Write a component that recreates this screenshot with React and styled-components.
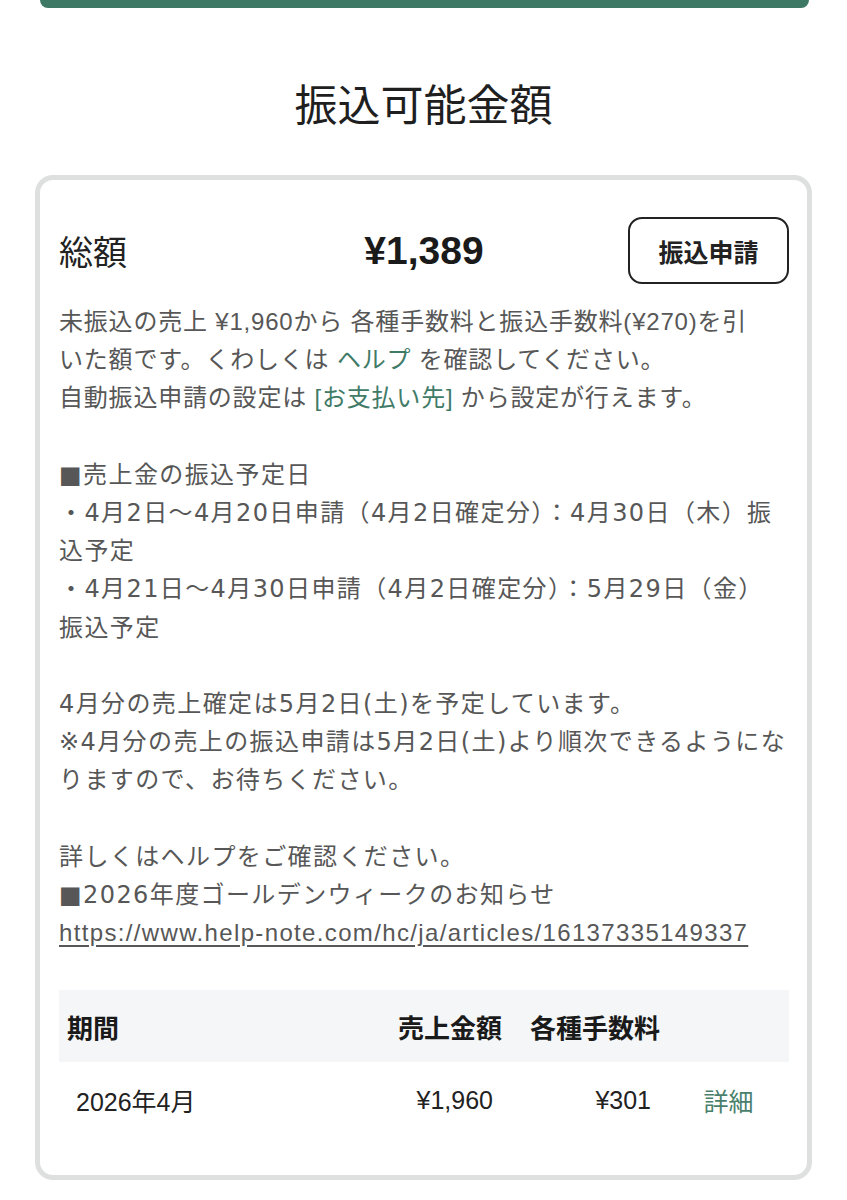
import React from 'react';
import styled, {createGlobalStyle} from "styled-components";

const GlobalStyle = createGlobalStyle`
  body {
    margin: 0;
    background: #fff;
    font-family: "Liberation Sans", "Noto Sans CJK JP", sans-serif;
    color: #222;
  }
`;

const TopBar = styled.div`
  height: 8px;
  margin: 0 38px 0 40px;
  background: #3e7966;
  border-radius: 0 0 10px 10px;
`;

const Title = styled.h1`
  margin: 68px 0 0;
  font-size: 43px;
  line-height: 60px;
  font-weight: 400;
  text-align: center;
  color: #1f1f1f;
`;

const Card = styled.section`
  margin: 39px 35px 0;
  border: 5px solid #dedfdf;
  border-radius: 18px;
  padding: 37px 18px 37px 19px;
`;

const TotalRow = styled.div`
  display: grid;
  grid-template-columns: 1fr auto 1fr;
  align-items: center;
  height: 67px;
`;

const TotalLabel = styled.div`
  font-size: 34px;
  color: #222;
`;

const TotalAmount = styled.div`
  font-size: 39px;
  font-weight: 700;
  color: #1a1a1a;
`;

const ApplyButton = styled.button`
  justify-self: end;
  width: 161px;
  height: 67px;
  border: 2px solid #222;
  border-radius: 14px;
  background: #fff;
  font-family: inherit;
  font-size: 25px;
  font-weight: 700;
  color: #222;
`;

const Notes = styled.div`
  margin-top: 19px;
  display: flex;
  flex-direction: column;
  gap: 38.2px;
`;

const Note = styled.p`
  margin: 0;
  font-family: ${p => p.$wide
    ? '"DejaVu Sans", "Noto Sans CJK JP", sans-serif'
    : '"Liberation Sans", "Noto Sans CJK JP", sans-serif'};
  font-size: 24px;
  line-height: 38.2px;
  letter-spacing: ${p => p.$wide ? '1.4px' : '0.8px'};
  color: #575757;
`;

const Link = styled.a`
  color: #3f7b67;
  text-decoration: none;
`;

const Url = styled.a`
  font-family: "Liberation Sans", sans-serif;
  color: #575757;
  letter-spacing: 1.35px;
  text-decoration: underline;
  text-underline-offset: 4px;
`;

const Table = styled.div`
  margin-top: 38px;
  display: grid;
  grid-template-columns: 1fr 136px 158px 121px;
`;

const HeadCell = styled.div`
  height: 72px;
  display: flex;
  align-items: center;
  justify-content: ${p => p.$right ? 'flex-end' : 'flex-start'};
  padding: 0 8px;
  background: #f5f6f7;
  font-size: 26px;
  font-weight: 700;
  color: #1a1a1a;
`;

const Cell = styled.div`
  height: 76px;
  display: flex;
  align-items: center;
  justify-content: ${p => p.$align || 'flex-start'};
  padding: 0 17px;
  font-size: 25px;
  color: ${p => p.$link ? '#4a7f6c' : '#222'};
`;

export default function App() {
    return (
        <>
            <GlobalStyle/>
            <TopBar/>
            <Title>振込可能金額</Title>
            <Card>
                <TotalRow>
                    <TotalLabel>総額</TotalLabel>
                    <TotalAmount>¥1,389</TotalAmount>
                    <ApplyButton>振込申請</ApplyButton>
                </TotalRow>

                <Notes>
                    <Note>
                        未振込の売上 ¥1,960から 各種手数料と振込手数料(¥270)を引<br/>
                        いた額です。くわしくは <Link href="#">ヘルプ</Link> を確認してください。<br/>
                        自動振込申請の設定は <Link href="#">[お支払い先]</Link> から設定が行えます。
                    </Note>
                    <Note $wide>
                        ■売上金の振込予定日<br/>
                        ・4月2日〜4月20日申請（4月2日確定分）：4月30日（木）振<br/>
                        込予定<br/>
                        ・4月21日〜4月30日申請（4月2日確定分）：5月29日（金）<br/>
                        振込予定
                    </Note>
                    <Note $wide>
                        4月分の売上確定は5月2日(土)を予定しています。<br/>
                        ※4月分の売上の振込申請は5月2日(土)より順次できるようにな<br/>
                        りますので、お待ちください。
                    </Note>
                    <Note $wide>
                        詳しくはヘルプをご確認ください。<br/>
                        ■2026年度ゴールデンウィークのお知らせ<br/>
                        <Url href="#">https://www.help-note.com/hc/ja/articles/16137335149337</Url>
                    </Note>
                </Notes>

                <Table>
                    <HeadCell>期間</HeadCell>
                    <HeadCell $right>売上金額</HeadCell>
                    <HeadCell $right>各種手数料</HeadCell>
                    <HeadCell/>
                    <Cell>2026年4月</Cell>
                    <Cell $align="flex-end">¥1,960</Cell>
                    <Cell $align="flex-end">¥301</Cell>
                    <Cell $align="center" $link>詳細</Cell>
                </Table>
            </Card>
        </>
    );
}
